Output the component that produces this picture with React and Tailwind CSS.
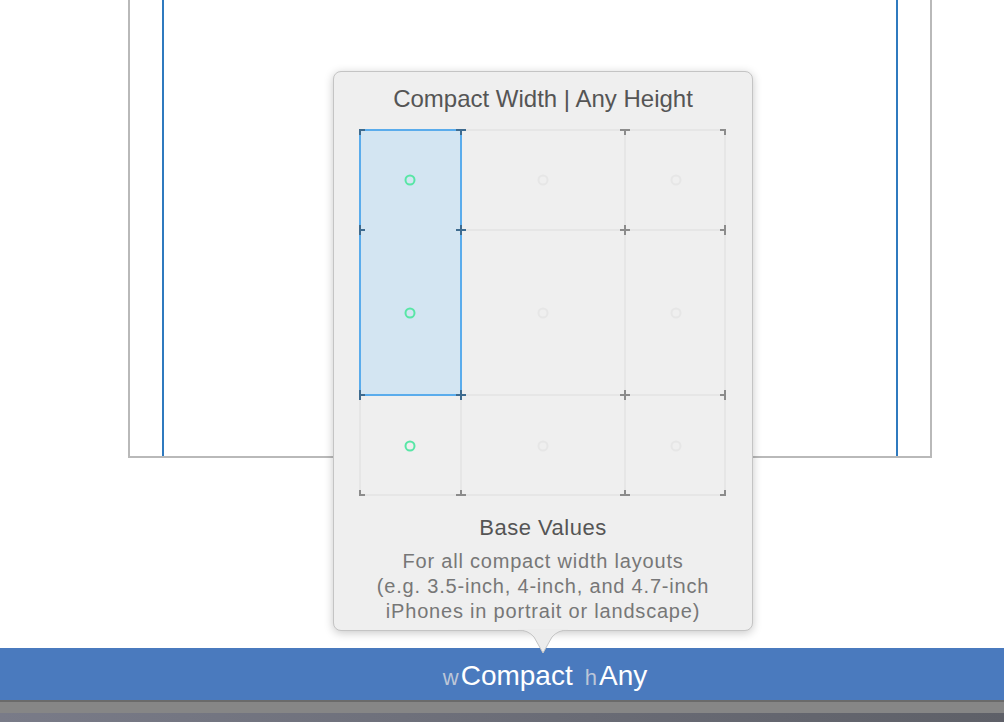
import React from "react";

const cols = [1, 102, 266, 366];
const rows = [1, 101, 266, 366];

function Mark({ x, y, color }) {
  const a = 5;
  const left = x > 1;
  const right = x < 366;
  const up = y > 1;
  const down = y < 366;
  return (
    <g stroke={color} strokeWidth="2">
      <line x1={left ? x - a : x - 1} y1={y} x2={right ? x + a : x + 1} y2={y} />
      <line x1={x} y1={up ? y - a : y - 1} x2={x} y2={down ? y + a : y + 1} />
    </g>
  );
}

function SizeGrid() {
  const dots = [
    { x: 51, y: 51, on: true },
    { x: 184, y: 51 },
    { x: 317, y: 51 },
    { x: 51, y: 184, on: true },
    { x: 184, y: 184 },
    { x: 317, y: 184 },
    { x: 51, y: 317, on: true },
    { x: 184, y: 317 },
    { x: 317, y: 317 },
  ];
  return (
    <svg width="368" height="368" viewBox="0 0 368 368">
      {cols.map((c) => (
        <line key={"c" + c} x1={c} y1="1" x2={c} y2="366" stroke="#e6e6e6" strokeWidth="2" />
      ))}
      {rows.map((r) => (
        <line key={"r" + r} x1="1" y1={r} x2="366" y2={r} stroke="#e6e6e6" strokeWidth="2" />
      ))}
      <rect x="1" y="1" width="101" height="265" fill="#d3e5f2" stroke="#5aacec" strokeWidth="2" />
      {rows.map((r) =>
        cols.map((c) => {
          const sel = c <= 102 && r <= 266;
          return <Mark key={c + "-" + r} x={c} y={r} color={sel ? "#3e6b8f" : "#8c8c8c"} />;
        })
      )}
      {dots.map((d, i) => (
        <circle
          key={i}
          cx={d.x}
          cy={d.y}
          r="4.5"
          fill="none"
          stroke={d.on ? "#58e6a6" : "#e6e6e6"}
          strokeWidth="2"
        />
      ))}
    </svg>
  );
}

export default function App() {
  return (
    <div
      className="relative w-[1004px] h-[722px] bg-white overflow-hidden"
      style={{ fontFamily: '"Liberation Sans", Arial, sans-serif' }}
    >
      {/* device canvas */}
      <div className="ml-[128px] w-[804px] h-[458px] border-2 border-t-0 border-[#b9b9b9] flex">
        <div className="ml-[32px] w-[2px] h-full bg-[#2f7abf]" />
        <div className="ml-[732px] w-[2px] h-full bg-[#2f7abf]" />
      </div>

      <div className="h-[190px]" />

      {/* size class bar */}
      <div className="h-[52px] bg-[#4a7abe] flex items-center justify-center pl-[86px] pt-[4px]">
        <span className="text-[22px] text-[#bcc6d8] mr-[2px] mt-[3px]">w</span>
        <span className="text-[28px] text-white">Compact</span>
        <span className="text-[22px] text-[#bcc6d8] ml-[12px] mr-[2px] mt-[3px]">h</span>
        <span className="text-[28px] text-white">Any</span>
      </div>
      <div className="h-[2px] bg-[#6a6a6a]" />
      <div className="h-[11px] bg-[#868686]" />
      <div className="h-[9px] bg-gradient-to-r from-[#797b88] to-[#5e6068]" />

      {/* popover */}
      <div className="absolute left-[333px] top-[71px] w-[420px] h-[560px]">
        <div className="w-full h-full rounded-[8px] bg-[#efefef] border border-[#c4c4c4] shadow-[0_2px_10px_rgba(0,0,0,0.22)] flex flex-col items-center">
          <div className="mt-[13px] text-[24px] leading-[28px] text-[#555555]">
            Compact Width | Any Height
          </div>
          <div className="mt-[16px]">
            <SizeGrid />
          </div>
          <div className="mt-[17px] text-[22px] leading-[28px] tracking-[0.5px] text-[#555555]">
            Base Values
          </div>
          <div className="mt-[7px] text-[20px] leading-[25px] tracking-[0.8px] text-[#777777] text-center">
            <div>For all compact width layouts</div>
            <div>(e.g. 3.5-inch, 4-inch, and 4.7-inch</div>
            <div>iPhones in portrait or landscape)</div>
          </div>
        </div>
        <svg
          className="absolute left-[185px] top-[558px]"
          width="50"
          height="27"
          viewBox="0 0 50 27"
        >
          <path d="M0 1 Q10 1 16 8 L25 24 L34 8 Q40 1 50 1 Z" fill="#ececec" />
          <path d="M0 1 Q10 1 16 8 L25 24 L34 8 Q40 1 50 1" fill="none" stroke="#c4c4c4" strokeWidth="1" />
          <rect x="0" y="0" width="50" height="1" fill="#ececec" />
        </svg>
      </div>
    </div>
  );
}
